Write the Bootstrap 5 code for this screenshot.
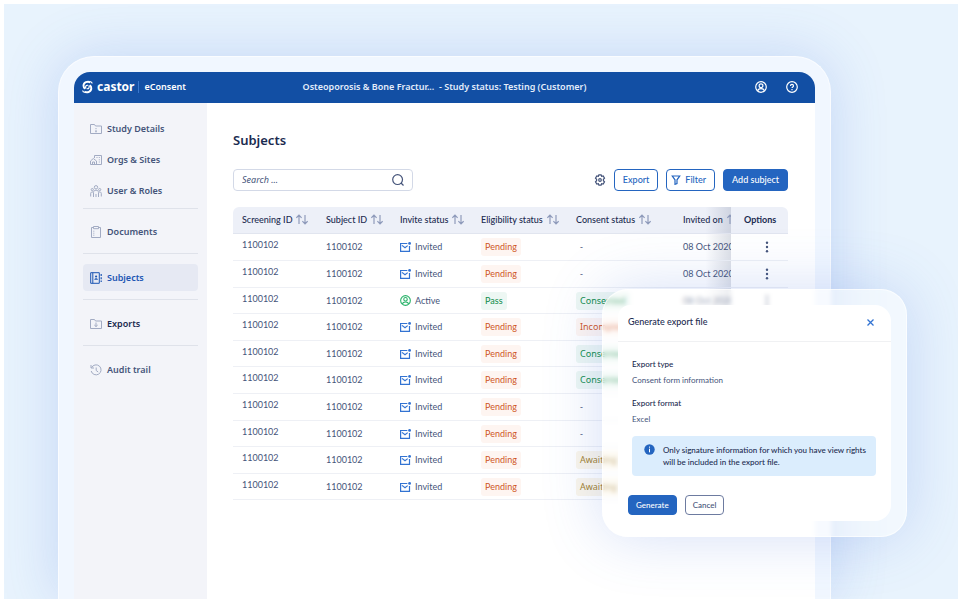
<!DOCTYPE html>
<html lang="en">
<head>
<meta charset="utf-8">
<meta name="viewport" content="width=device-width, initial-scale=1">
<title>Castor eConsent – Subjects</title>
<link href="https://cdn.jsdelivr.net/npm/bootstrap@5.3.0/dist/css/bootstrap.min.css" rel="stylesheet">
<style>
  :root { --navy:#1b2b50; --slate:#45547a; --blue:#2465c0; --bar:#124fa4; --line:#eef0f5; --glow:rgba(75,115,220,.23); }
  body { font-family:"Lato","Noto Sans",sans-serif; font-size:9px; line-height:12px; color:var(--slate); background:#fff; padding:4px 0 0 4px; min-height:100vh; }
  svg { display:block; flex:none; fill:none; stroke:currentColor; }
  .noto { font-family:"Noto Sans","Open Sans",sans-serif; }
  .stage { min-height:calc(100vh - 4px); padding:52px 127px 0 54px; background:#e8f3fd; overflow:hidden; }
  .device { padding:15px 15px 0; border:1px solid #fafcff; border-bottom:0; border-radius:36px 36px 0 0; background:#f1f7ff; box-shadow:0 0 56px var(--glow); }
  .app { border-radius:16px 16px 0 0; overflow:hidden; background:#fff; }
  .topbar { display:grid; grid-template-columns:1fr auto 1fr; height:31px; padding:0 8px 1px; background:var(--bar); color:#fff; }
  .topbar a, .topbar button { color:#fff; }
  .topbar-actions { gap:19px; padding-right:9px; }
  .brand-name { font-size:12px; font-weight:700; line-height:16px; }
  .product { font-weight:600; border-left:1px solid #3b78cc; padding-left:5px; }
  .study { font-weight:600; color:#e4edfb; white-space:pre; }
  .plain { background:none; border:0; padding:0; color:inherit; font:inherit; }
  .side { width:133px; padding:12px 9px; background:#f3f4f9; flex:none; }
  .side-link { height:27px; padding-left:7px; gap:5px; border-radius:4px; font-size:9px; font-weight:600; color:var(--slate); text-decoration:none; }
  .side-link svg { color:#a2abc3; }
  .side-link.dark { color:var(--navy); }
  .side-link.active { background:#e6e9f3; color:#1c56b3; }
  .side-link.active svg { color:#1c56b3; }
  .side hr { margin:8px 0 10px; border-top:1px solid #dfe2ea; opacity:1; }
  .side .near { margin:4px 0 9px; }
  .side-group { gap:4px; }
  .content { padding:27px 27px 0 26px; min-width:0; }
  .content h1 { font-size:13px; line-height:20px; font-weight:600; color:var(--navy); margin:0 0 19px; }
  .tools { gap:8px; margin-bottom:16px; color:var(--slate); }
  .search { width:180px; height:22px; border:1px solid #d3d9e7; border-radius:4px; padding:0 8px; }
  .search input { border:0; outline:0; background:none; padding:0; width:100%; min-width:0; font-style:italic; color:var(--slate); }
  .search input::placeholder { color:var(--slate); opacity:1; }
  .btn { --bs-btn-font-size:9px; --bs-btn-line-height:12px; --bs-btn-border-radius:4px; --bs-btn-padding-y:4px; --bs-btn-padding-x:8px; --bs-btn-font-weight:500; }
  .btn-line { --bs-btn-color:var(--blue); --bs-btn-border-color:var(--blue); --bs-btn-bg:#fff; }
  .btn-fill { --bs-btn-color:#fff; --bs-btn-bg:var(--blue); --bs-btn-border-color:var(--blue); }
  .btn-grey { --bs-btn-color:var(--slate); --bs-btn-border-color:#6d7ba0; --bs-btn-bg:#fff; }
  .grid { width:100%; table-layout:fixed; border-collapse:separate; border-spacing:0; }
  .grid th, .grid td { padding:0 0 0 9px; white-space:nowrap; overflow:hidden; border-bottom:1px solid var(--line); vertical-align:middle; }
  .grid thead th { height:27px; background:#edf0f8; color:var(--navy); font-weight:500; border-bottom-color:#e1e5ef; }
  .grid thead th:first-child { border-top-left-radius:6px; }
  .grid thead th:last-child { border-top-right-radius:6px; font-weight:700; }
  .grid tbody tr { height:27px; }
  .grid tbody tr:nth-child(5n), .grid tbody tr:nth-child(5n+3) { height:26px; }
  .grid tbody td:first-child { padding-bottom:4px; }
  .grid th.cut { background:linear-gradient(90deg,transparent 55%,rgba(60,75,110,.17)) #edf0f8; }
  .grid td.cut { background:linear-gradient(90deg,transparent 55%,rgba(60,75,110,.17)); }
  .grid th.opt { padding:0 0 0 13px; }
  .grid td.opt { padding:0 0 0 30px; }
  .sort svg { color:#8f9bbb; }
  .pill { display:inline-block; padding:3px 4px; border-radius:3px; }
  .pill-pend { color:#cf5526; background:#fef5f1; }
  .pill-ok { color:#0d8c4a; background:#edf7f3; }
  .pill-wait { color:#a3812c; background:#fbf6ea; }
  .c-blue { color:#3273d2; } .c-green { color:#2bb36b; }
  .export-pop { position:absolute; top:289px; right:51px; width:305px; padding:15px; border:1px solid rgba(255,255,255,.65); border-radius:26px; background:rgba(255,255,255,.42); backdrop-filter:blur(2px); box-shadow:0 0 60px var(--glow); }
  .pop-inner { background:#fff; border-radius:12px 16px 16px 12px; padding-bottom:6px; font-size:8px; }
  .pop-head { height:37px; padding:0 17px 2px 10px; border-bottom:1px solid #f0f1f3; }
  .pop-head h2 { font-size:9px; line-height:12px; font-weight:500; color:var(--navy); margin:0; }
  .pop-body { padding:16px 15px 19px 14px; }
  .pop-body dt { font-weight:500; color:var(--navy); margin-bottom:4px; }
  .pop-body dd { margin-bottom:11px; }
  .note { background:#dbedfd; border-radius:4px; padding:8px 8px 8px 12px; gap:8px; color:var(--navy); font-weight:500; }
  .pop-foot { padding-left:10px; gap:8px; }
  .pop-foot .btn { --bs-btn-font-size:8px; --bs-btn-padding-y:3px; --bs-btn-padding-x:7px; }
</style>
<script src="https://cdn.jsdelivr.net/npm/bootstrap@5.3.0/dist/js/bootstrap.bundle.min.js"></script>
</head>
<body>
<svg width="0" height="0" class="position-absolute" aria-hidden="true">
  <symbol id="sort" viewBox="0 0 12 11"><path stroke-width="1.200" d="M3 10V1.200M.4 3.800 3 1.200l2.600 2.600M9 1v8.800M6.400 7.200 9 9.800l2.600-2.600"/></symbol>
  <symbol id="mail" viewBox="0 0 11 10"><path stroke-width="1.200" d="M7.300 1.500H.6v7.900h8.900V4M2 3.400l3 2.400 2.700-2.200"/><circle cx="9.600" cy="1.400" r="1.400" fill="currentColor" stroke="none"/></symbol>
  <symbol id="person" viewBox="0 0 12 12"><g stroke-width="1.200"><circle cx="6" cy="6" r="5.300"/><circle cx="6" cy="4.700" r="1.900"/><path d="M2.700 9.800C3 8 4.300 7.600 6 7.600S9 8 9.300 9.800"/></g></symbol>
  <symbol id="dots" viewBox="0 0 12 12"><g fill="currentColor" stroke="none"><circle cx="6" cy="1.800" r="1.200"/><circle cx="6" cy="6" r="1.200"/><circle cx="6" cy="10.200" r="1.200"/></g></symbol>
</svg>
<div class="stage d-flex">
  <div class="device d-flex flex-grow-1">
    <div class="app d-flex flex-column flex-grow-1">
      <header class="topbar noto align-items-center">
        <div class="d-flex align-items-center">
          <a href="#" class="d-flex align-items-center text-decoration-none">
            <svg width="11" height="14" viewBox="0 0 11 14" stroke-width="1.900"><path d="M8.400 2.400C5.600.8 1.500 2.400 1.500 5.800c0 1.500.6 2.400 1.500 3"/><path d="M2.400 11.600c2.800 1.600 6.900 0 6.900-3.400 0-1.500-.6-2.400-1.500-3"/><path d="M4 8.600C2.900 6.800 4 5 6 5.300M6.800 5.400c1.100 1.800 0 3.600-2 3.300" stroke-width="1.200"/><path d="M7.500.8 10.300 2v2.300z" fill="currentColor" stroke="none"/><path d="M3.300 13.200.5 12V9.700z" fill="currentColor" stroke="none"/></svg>
            <span class="brand-name mx-1">castor</span>
          </a>
          <span class="product">eConsent</span>
        </div>
        <div class="study">Osteoporosis &amp; Bone Fractur...  - Study status: Testing (Customer)</div>
        <div class="topbar-actions d-flex justify-content-end">
          <button type="button" class="plain" aria-label="Account"><svg width="12" height="12"><use href="#person"/></svg></button>
          <button type="button" class="plain" aria-label="Help"><svg width="12" height="12" viewBox="0 0 12 12" stroke-width="1.200"><circle cx="6" cy="6" r="5.300"/><path d="M4.500 4.900c0-2 3-2 3 0 0 1-1.500 1.100-1.500 2.200M6 8.100v1.100"/></svg></button>
        </div>
      </header>
      <div class="d-flex flex-grow-1">
        <nav class="side noto" aria-label="Study">
          <div class="side-group d-flex flex-column">
            <a href="#" class="side-link d-flex align-items-center"><svg width="12" height="12" viewBox="0 0 12 12"><path d="M.5 10.500v-9h4l1 1.500h6v7.500zM6 5v1M6 6.800V9M5.300 8.800h1.400"/></svg>Study Details</a>
            <a href="#" class="side-link d-flex align-items-center"><svg width="12" height="12" viewBox="0 0 12 12"><path d="M4.500 4V1.500h7v9H.5V7L3.300 4.500 6.500 7v3.500M2.500 10.500V8h2v2.500M6.500 3.500h1M8.800 3.500h1M8.800 5.800h1M8.800 8h1"/></svg>Orgs &amp; Sites</a>
            <a href="#" class="side-link d-flex align-items-center"><svg width="12" height="12" viewBox="0 0 12 12"><circle cx="6" cy="2.300" r="1.700"/><circle cx="2.300" cy="4.600" r="1.100"/><circle cx="9.700" cy="4.600" r="1.100"/><path d="M3.500 12V7.500C3.500 6 4.500 5.200 6 5.200s2.500.8 2.500 2.300V12M6 9v3M.7 11.500V8.400C.7 7.300 1.500 6.900 3 7M11.300 11.500V8.400C11.300 7.300 10.500 6.900 9 7"/></svg>User &amp; Roles</a>
          </div>
          <hr class="near">
          <a href="#" class="side-link d-flex align-items-center"><svg width="12" height="12" viewBox="0 0 12 12"><path d="M3.500 1.500h-2v10h9v-10h-2M3.500.5h5v2.200h-5zM3.300 5.200h1M3.300 7.200h1M3.300 9.200h1"/></svg>Documents</a>
          <hr>
          <a href="#" class="side-link active d-flex align-items-center" aria-current="page"><svg width="12" height="12" viewBox="0 0 12 12"><path d="M.7.700h8.600v10.600H.7zM2.800.7v10.600"/><circle cx="6.100" cy="4.500" r="1.100" fill="currentColor" stroke="none"/><path d="M4.300 7.700c0-2 3.600-2 3.600 0z" fill="currentColor" stroke="none"/><path d="M11.200 2v2M11.200 5.200v2M11.200 8.400v1.600" stroke-width="1.200"/></svg>Subjects</a>
          <hr>
          <a href="#" class="side-link dark d-flex align-items-center"><svg width="12" height="12" viewBox="0 0 12 12"><path d="M.5 10.500v-9h4l1 1.500h6v7.500zM6 4.500v4M4.300 7 6 8.600 7.700 7"/></svg>Exports</a>
          <hr>
          <a href="#" class="side-link d-flex align-items-center"><svg width="12" height="12" viewBox="0 0 12 12"><path d="M1.500 3.800A5 5 0 1 1 1.200 7M1 1v3h3M6.200 3.500v3l2 1.500"/></svg>Audit trail</a>
        </nav>
        <main class="content flex-grow-1">
          <h1 class="noto">Subjects</h1>
          <div class="tools d-flex align-items-center">
            <label class="search d-flex align-items-center me-auto"><input class="noto" type="search" placeholder="Search ..." aria-label="Search subjects"><svg width="12" height="12" viewBox="0 0 12 12" stroke-width="1.200"><circle cx="5.600" cy="5.600" r="4.900"/><path d="m9 9 2.500 2.500"/></svg></label>
            <button type="button" class="plain" aria-label="Settings"><svg width="12" height="12" viewBox="0 0 12 12" stroke-width="1.200"><path d="M4.900.8h2.200l.5 1.500 1.600-.3 1.300 2.100L9.400 5.300v1.400l1.100 1.200-1.300 2.100-1.600-.3-.5 1.500H4.900l-.5-1.500-1.600.3-1.300-2.100 1.100-1.200V5.300L1.500 4.100 2.800 2l1.600.3z"/><circle cx="6" cy="6" r="1.300"/></svg></button>
            <button type="button" class="btn btn-line">Export</button>
            <button type="button" class="btn btn-line d-flex align-items-center px-1"><svg width="10" height="10" viewBox="0 0 10 10" class="me-1" stroke-width="1.200"><path d="M1.300 1h7.400L6 4.800v3.700l-2 .8V4.800z"/></svg><span class="me-1">Filter</span></button>
            <button type="button" class="btn btn-fill">Add subject</button>
          </div>
          <table class="grid">
            <colgroup><col style="width:84px"><col style="width:74px"><col style="width:81px"><col style="width:95px"><col style="width:107px"><col style="width:57px"><col style="width:57px"></colgroup>
            <thead><tr>
              <th scope="col"><button class="plain sort d-flex gap-1" type="button">Screening ID<svg width="12" height="11"><use href="#sort"/></svg></button></th>
              <th scope="col"><button class="plain sort d-flex gap-1" type="button">Subject ID<svg width="12" height="11"><use href="#sort"/></svg></button></th>
              <th scope="col"><button class="plain sort d-flex gap-1" type="button">Invite status<svg width="12" height="11"><use href="#sort"/></svg></button></th>
              <th scope="col"><button class="plain sort d-flex gap-1" type="button">Eligibility status<svg width="12" height="11"><use href="#sort"/></svg></button></th>
              <th scope="col"><button class="plain sort d-flex gap-1" type="button">Consent status<svg width="12" height="11"><use href="#sort"/></svg></button></th>
              <th scope="col" class="cut"><button class="plain sort d-flex gap-1" type="button">Invited on<svg width="12" height="11"><use href="#sort"/></svg></button></th>
              <th scope="col" class="opt">Options</th>
            </tr></thead>
            <tbody id="rows"></tbody>
          </table>
        </main>
      </div>
    </div>
  </div>
</div>

<section class="export-pop" role="dialog" aria-labelledby="pop-title">
  <div class="pop-inner">
    <div class="pop-head d-flex align-items-center justify-content-between">
      <h2 id="pop-title">Generate export file</h2>
      <button type="button" class="plain c-blue" aria-label="Close"><svg width="7" height="7" viewBox="0 0 7 7" stroke-width="1.300"><path d="m.5.5 6 6M6.500.5l-6 6"/></svg></button>
    </div>
    <div class="pop-body">
      <dl class="mb-0">
        <dt>Export type</dt><dd>Consent form information</dd>
        <dt>Export format</dt><dd>Excel</dd>
      </dl>
      <div class="note d-flex">
        <svg width="11" height="11" viewBox="0 0 11 11"><circle cx="5.500" cy="5.500" r="5.200" fill="#2465c0" stroke="none"/><path d="M5.500 2.600v1.100M5.500 4.700v3.600" stroke="#fff"/></svg>
        <span>Only signature information for which you have view rights will be included in the export file.</span>
      </div>
    </div>
    <div class="pop-foot d-flex">
      <button type="button" class="btn btn-fill">Generate</button>
      <button type="button" class="btn btn-grey">Cancel</button>
    </div>
  </div>
</section>

<script>
  const consent = ["-", "-", "Consented", "Incomplete", "Consented", "Consented", "-", "-", "Awaiting", "Awaiting"];
  const tone = { Pending: "pend", Pass: "ok", Consented: "ok", Incomplete: "pend", Awaiting: "wait", "-": "none" };
  const pill = t => `<span class="pill pill-${tone[t]}">${t}</span>`;
  document.getElementById("rows").innerHTML = consent.map((c, i) => {
    const active = i === 2;
    const status = active
      ? '<svg class="c-green" width="11" height="11"><use href="#person"/></svg>Active'
      : '<svg class="c-blue" width="11" height="10"><use href="#mail"/></svg>Invited';
    return `<tr><td>1100102</td><td>1100102</td>
      <td><span class="d-flex align-items-center gap-1">${status}</span></td>
      <td>${pill(active ? "Pass" : "Pending")}</td><td class="noto">${pill(c)}</td>
      <td class="cut">08 Oct 2020</td>
      <td class="opt"><button type="button" class="plain d-block" aria-label="Row options"><svg width="12" height="12"><use href="#dots"/></svg></button></td></tr>`;
  }).join("");
</script>
</body>
</html>
